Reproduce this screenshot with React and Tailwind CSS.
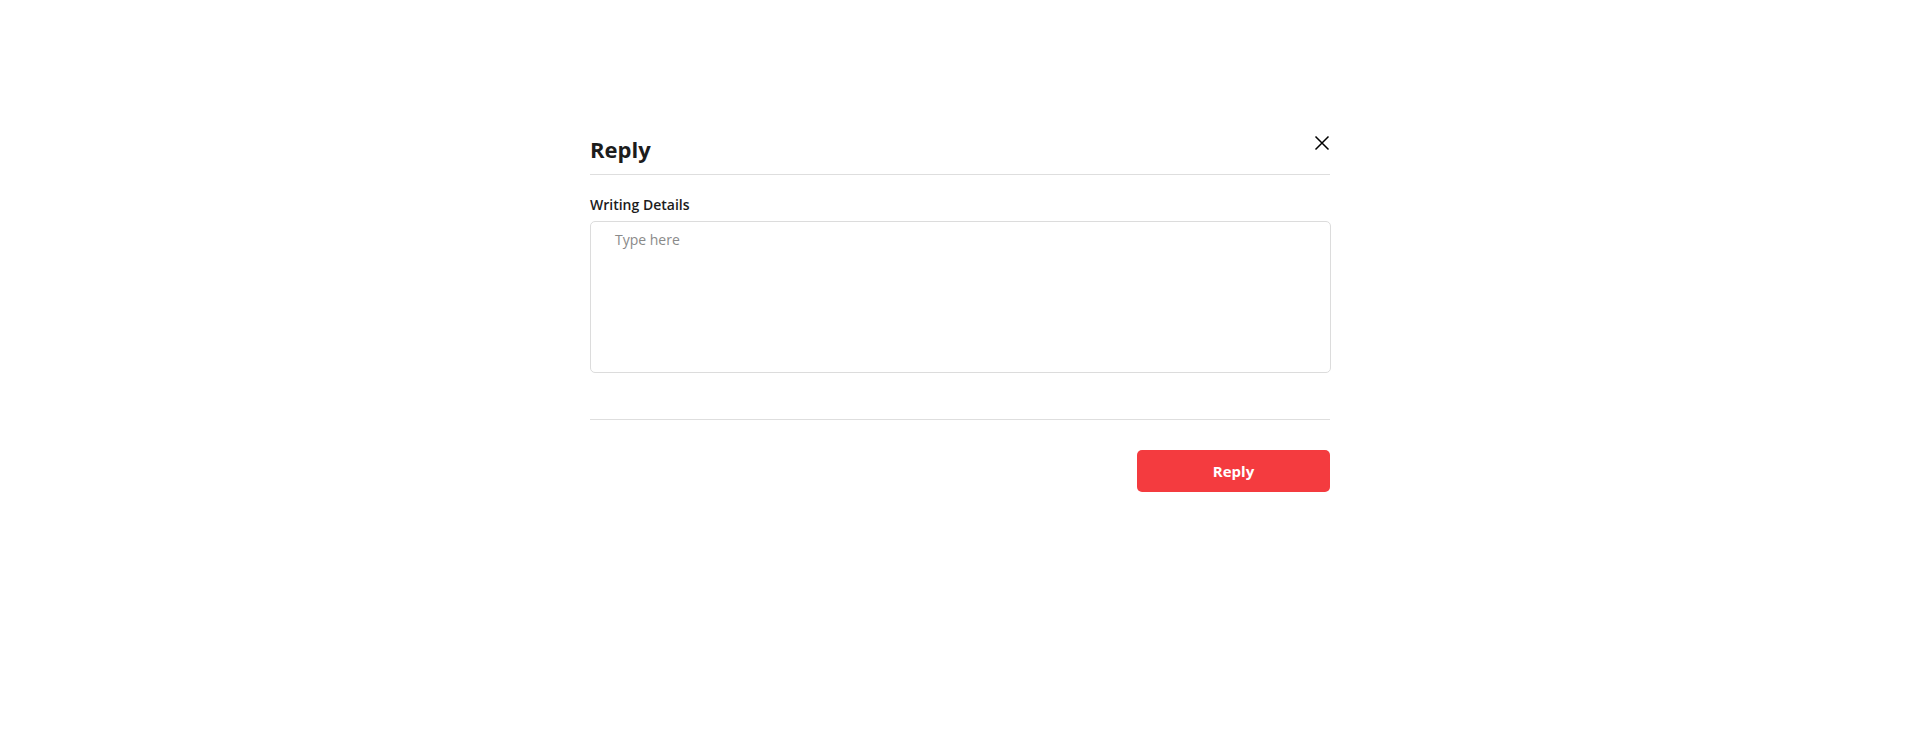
import { useState } from 'react';

export default function App() {
  const [text, setText] = useState('');

  return (
    <div className="min-h-screen bg-white font-['Open_Sans',sans-serif] text-[#1c1c1c]">
      <div className="mx-auto w-[740px] pt-[134px]">
        <div className="flex items-start justify-between border-b border-[#dedede] pb-[10px]">
          <h1 className="text-[22px] leading-[30px] font-bold">Reply</h1>
          <button type="button" className="mt-[1px] text-black" aria-label="Close">
            <svg width="16" height="16" viewBox="0 0 16 16" fill="none" stroke="currentColor" strokeWidth="1.5">
              <path d="M1.5 1.5 L14.5 14.5 M14.5 1.5 L1.5 14.5" />
            </svg>
          </button>
        </div>

        <label className="mt-5 mb-[6px] block text-[14px] leading-5 font-semibold">Writing Details</label>
        <textarea
          value={text}
          onChange={(e) => setText(e.target.value)}
          placeholder="Type here"
          className="block h-[152px] w-[741px] resize-none rounded-[5px] border border-[#dcdcdc] px-6 pt-[8px] pb-2 text-[14px] leading-5 placeholder:text-[#8a8a8a] focus:outline-none"
        />

        <div className="mt-[46px] border-t border-[#dedede]" />

        <div className="mt-[30px] flex justify-end">
          <button
            type="button"
            className="h-[42px] w-[193px] rounded-[5px] bg-[#f43b3f] text-[15px] font-bold text-white"
          >
            Reply
          </button>
        </div>
      </div>
    </div>
  );
}
